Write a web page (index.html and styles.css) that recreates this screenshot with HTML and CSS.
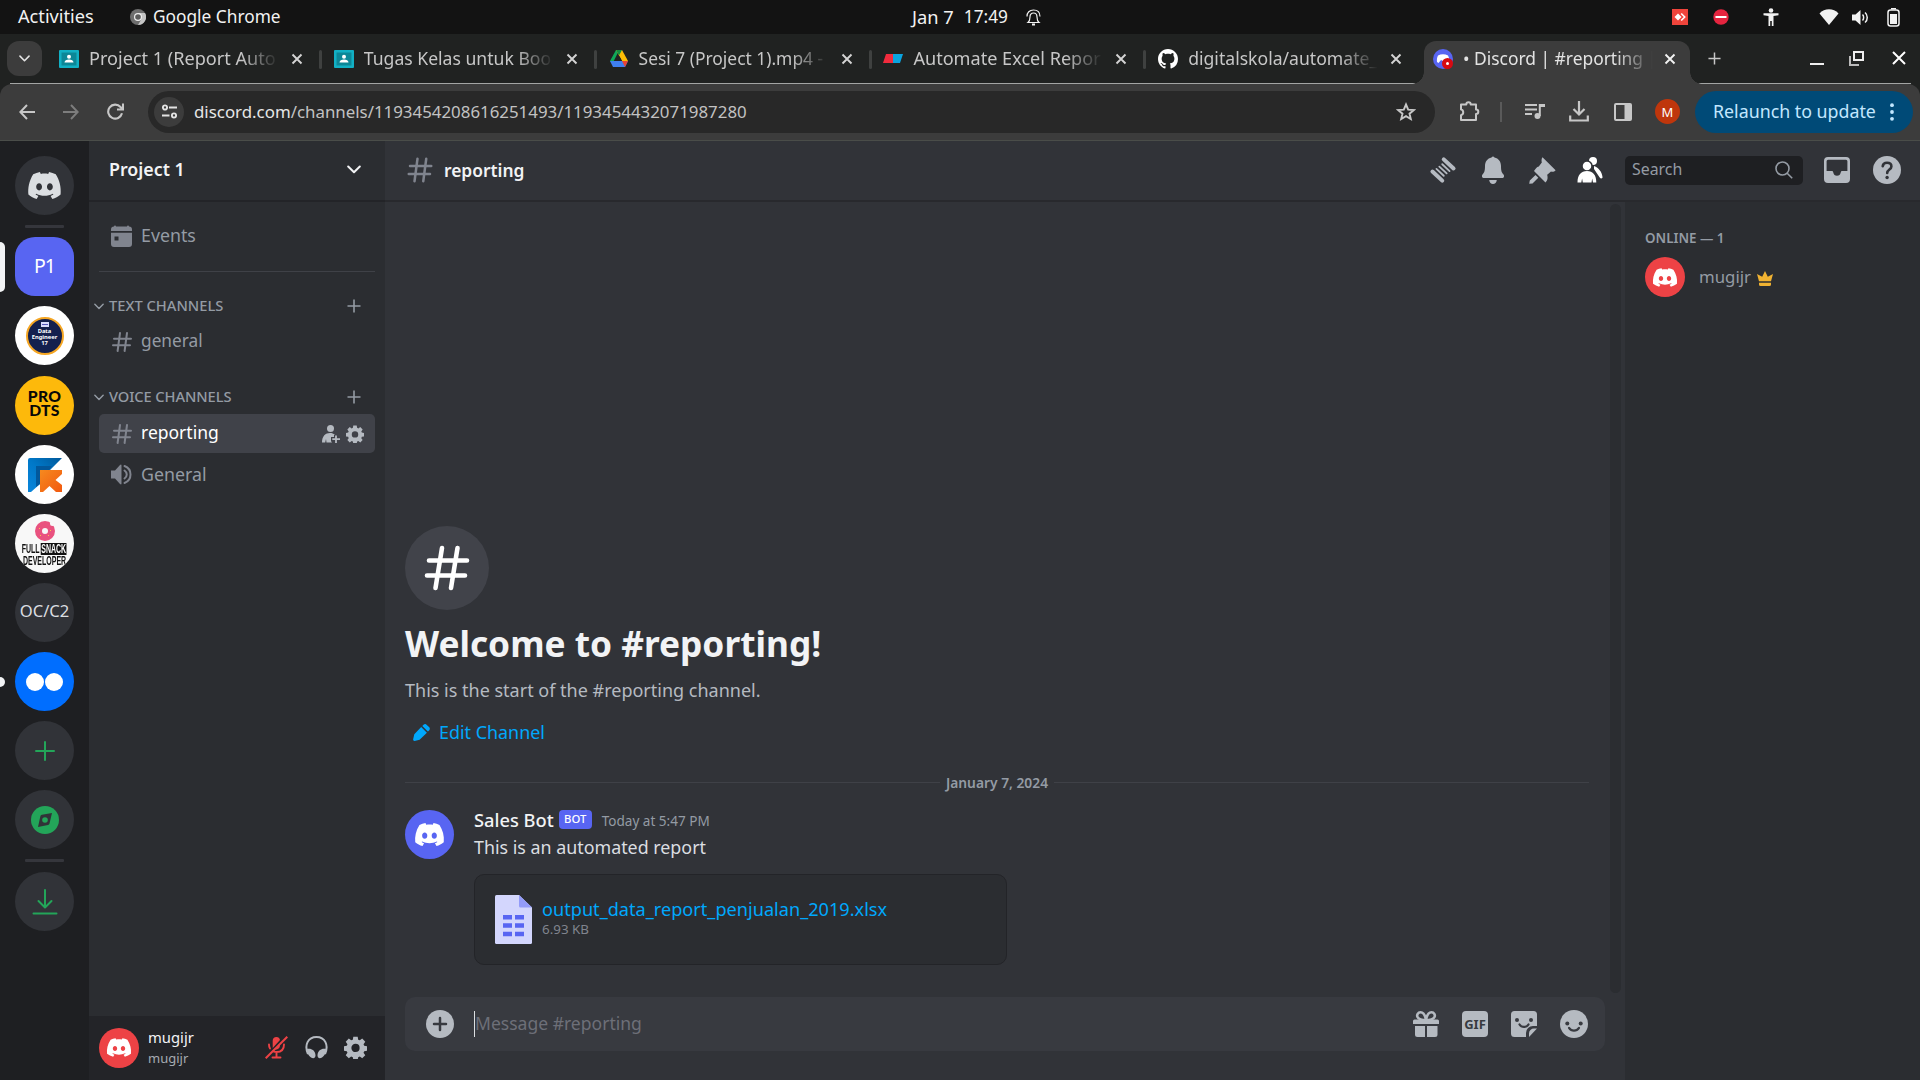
FILE: index.html
```html
<!DOCTYPE html>
<html lang="en">
<head>
<meta charset="utf-8">
<title>• Discord | #reporting</title>
<link rel="stylesheet" href="styles.css">
</head>
<body>
<svg class="defs" aria-hidden="true">
  <symbol id="discord" viewBox="0 0 28 20"><path fill="currentColor" d="M23.0212 1.67671C21.3107 0.879656 19.5079 0.318797 17.6584 0C17.4062 0.461742 17.1749 0.934541 16.9708 1.4184C15.003 1.12145 12.9974 1.12145 11.0283 1.4184C10.819 0.934541 10.589 0.461744 10.3368 0.00546311C8.48074 0.324393 6.67795 0.885118 4.96746 1.68231C1.56727 6.77853 0.649666 11.7538 1.11108 16.652C3.10102 18.1418 5.3262 19.2743 7.69177 20C8.22338 19.2743 8.69519 18.4993 9.09812 17.691C8.32996 17.3997 7.58522 17.0424 6.87684 16.6135C7.06531 16.4762 7.24726 16.3387 7.42403 16.1847C11.5911 18.1749 16.408 18.1749 20.5763 16.1847C20.7531 16.3332 20.9351 16.4762 21.1171 16.6135C20.41 17.0369 19.6639 17.3997 18.897 17.691C19.3052 18.4993 19.7718 19.2689 20.3021 19.9945C22.6677 19.2689 24.8929 18.1364 26.8828 16.6466H26.8893C27.43 10.9731 25.9665 6.04728 23.0212 1.67671ZM9.68041 13.6383C8.39754 13.6383 7.34085 12.4453 7.34085 10.994C7.34085 9.54272 8.37155 8.34973 9.68041 8.34973C10.9893 8.34973 12.0395 9.54272 12.0187 10.994C12.0187 12.4453 10.9828 13.6383 9.68041 13.6383ZM18.3161 13.6383C17.0332 13.6383 15.9765 12.4453 15.9765 10.994C15.9765 9.54272 17.0124 8.34973 18.3161 8.34973C19.6184 8.34973 20.6751 9.54272 20.6543 10.994C20.6543 12.4453 19.6184 13.6383 18.3161 13.6383Z"/></symbol>
  <symbol id="hash" viewBox="0 0 24 24"><path fill="none" stroke="currentColor" stroke-width="2" stroke-linecap="round" d="M10 3 7.6 21M17 3l-2.4 18M4 8.8h17M3 15.2h17"/></symbol>
  <symbol id="close" viewBox="0 0 12 12"><path fill="none" stroke="currentColor" stroke-width="1.9" d="M1.5 1.5l9 9M10.500 1.500l-9 9"/></symbol>
  <symbol id="chevron" viewBox="0 0 14 9"><path fill="none" stroke="currentColor" stroke-width="2" stroke-linecap="round" stroke-linejoin="round" d="M1.200 1.500 7 7.300l5.800-5.800"/></symbol>
  <symbol id="plus" viewBox="0 0 14 14"><path fill="none" stroke="currentColor" stroke-width="1.600" d="M7 .5v13M.5 7h13"/></symbol>
  <symbol id="gear" viewBox="0 0 24 24"><path fill="currentColor" fill-rule="evenodd" d="M9.700 0.800h4.600l.5 3 1.700.7 2.500-1.800 3.200 3.300-1.800 2.500.7 1.600 3 .5v4.700l-3 .5-.7 1.700 1.800 2.500-3.200 3.200-2.500-1.800-1.700.7-.5 3H9.700l-.5-3-1.700-.7L5 23.200 1.800 20l1.800-2.500-.7-1.700-3-.5v-4.700l3-.5.7-1.600L1.800 6 5 2.700l2.500 1.800 1.700-.7zM12 8.200a4.300 4.300 0 1 0 0 8.600 4.300 4.300 0 0 0 0-8.600z"/></symbol>
  <symbol id="classroom" viewBox="0 0 20 18"><rect width="20" height="18" rx="1" fill="#12b0c4"/><rect x="2.500" y="2.500" width="15" height="13" fill="#0c8797"/><circle cx="10" cy="6.700" r="2" fill="#fff"/><path fill="#fff" d="M5.500 12.500c0-2 2-3.100 4.500-3.100s4.500 1.100 4.500 3.100z"/></symbol>
</svg>

<header class="topbar">
  <div class="topbar-left">
    <span class="activities">Activities</span>
    <svg width="16" height="16" viewBox="0 0 16 16"><circle cx="8" cy="8" r="8" fill="#6e6e6e"/><path fill="#c4c4c4" d="M8 4h7a8 8 0 0 1-7 12l3.500-6z"/><circle cx="8" cy="8" r="4" fill="#eee"/><circle cx="8" cy="8" r="2.800" fill="#5c5c5c"/></svg>
    <span class="app-name">Google Chrome</span>
  </div>
  <div class="clock"><span class="day">Jan 7</span><span>17:49</span>
    <svg width="15" height="17" viewBox="0 0 15 17" fill="none" stroke="#f2f2f2" stroke-width="1.200"><path d="M2 13.500c1.800-1.500 2-3 2-5.500 0-2.500 1.200-4 3.500-4S11 5.500 11 8c0 2.500.2 4 2 5.500zM1 7.500C1 3.500 3.500 1 7.500 1S14 3.500 14 7.500"/><path d="M6 15.500h3" stroke-width="2"/></svg>
  </div>
  <div class="tray">
    <svg width="16" height="16" viewBox="0 0 16 16"><path fill="#ef443b" d="M0 0h16v16H0z"/><path fill="#fff" d="M6 4.500 9.500 8 6 11.500 2.500 8z"/><path fill="none" stroke="#fff" stroke-width="1.600" d="M9.200 4.500 12.700 8l-3.500 3.500"/></svg>
    <svg class="tray-stop" width="16" height="16" viewBox="0 0 16 16"><circle cx="8" cy="8" r="7.700" fill="#e5243f"/><path fill="#fff" d="M2.500 7h11v2h-11z"/></svg>
    <svg class="tray-person" width="16" height="18" viewBox="0 0 16 18" fill="#f2f2f2"><circle cx="8" cy="2.500" r="2.300"/><path d="M.5 5.300h15v2L10.500 8v10H8.800v-5H7.200v5H5.500V8L.5 7.300z"/></svg>
    <svg class="tray-wifi" width="20" height="16" viewBox="0 0 20 16"><path fill="#f2f2f2" d="M10 16 .5 4.500C3 1.500 6.500.3 10 .3s7 1.200 9.500 4.200z"/></svg>
    <svg class="tray-sound" width="18" height="17" viewBox="0 0 18 17"><path fill="#f2f2f2" d="M0 5.500h3.500L8.500 1v15l-5-4.500H0z"/><path fill="none" stroke="#f2f2f2" stroke-width="1.500" d="M10.500 5.500c1.500 1.500 1.500 4.500 0 6M13 3.500c3 2.500 3 7.500 0 10"/></svg>
    <svg class="tray-battery" width="13" height="19" viewBox="0 0 13 19"><rect x="1" y="2" width="11" height="16" rx="2.500" fill="none" stroke="#f2f2f2" stroke-width="1.500"/><path fill="#f2f2f2" d="M4 0h5v1.500H4zM3 6h7v10H3z"/></svg>
  </div>
</header>

<div class="tabstrip">
  <div class="tab-search"><svg width="11" height="7"><use href="#chevron"/></svg></div>
  <div class="tab"><svg class="fav" width="20" height="18"><use href="#classroom"/></svg><span class="tab-title">Project 1 (Report Auto</span><svg class="x" width="12" height="12"><use href="#close"/></svg></div>
  <div class="tab"><svg class="fav" width="20" height="18"><use href="#classroom"/></svg><span class="tab-title tight">Tugas Kelas untuk Boo</span><svg class="x" width="12" height="12"><use href="#close"/></svg></div>
  <div class="tab"><svg class="fav" width="20" height="17" viewBox="0 0 20 17"><path fill="#0fa958" d="M7 0h3l-2.500 5.500-4 8L1 11z"/><path fill="#fcbd05" d="M7 0h6l6 11h-6z"/><path fill="#158a41" d="M7 0h6l-3 5.500z"/><path fill="#3f7ff0" d="M1 11h18l-3 6H4z"/><path fill="#ea4335" d="M13 11h6l-3 6z"/><path fill="#202221" d="M10 5.500 13 11H7z"/></svg><span class="tab-title drive">Sesi 7 (Project 1).mp4 -</span><svg class="x" width="12" height="12"><use href="#close"/></svg></div>
  <div class="tab"><svg class="fav" width="20" height="9" viewBox="0 0 20 9"><path fill="#f12b3d" d="M3 0h7v9H0z"/><path fill="#0aa4e0" d="M10 0h10l-3 9h-7z"/></svg><span class="tab-title">Automate Excel Repor</span><svg class="x" width="12" height="12"><use href="#close"/></svg></div>
  <div class="tab"><svg class="fav" width="20" height="20" viewBox="0 0 16 16"><path fill="#fff" d="M8 0C3.580 0 0 3.580 0 8c0 3.540 2.290 6.530 5.470 7.590.4.070.55-.17.55-.38 0-.19-.01-.82-.01-1.490-2.010.37-2.530-.49-2.690-.94-.09-.23-.48-.94-.82-1.130-.28-.15-.68-.52-.01-.53.63-.01 1.080.58 1.230.82.72 1.210 1.870.87 2.330.66.07-.52.28-.87.51-1.070-1.780-.2-3.640-.89-3.640-3.950 0-.87.31-1.590.82-2.150-.08-.2-.36-1.020.08-2.120 0 0 .67-.21 2.200.82.64-.18 1.320-.27 2-.27s1.360.09 2 .27c1.530-1.040 2.200-.82 2.200-.82.44 1.100.16 1.920.08 2.120.51.56.82 1.270.82 2.150 0 3.070-1.870 3.750-3.650 3.950.29.25.54.73.54 1.480 0 1.070-.01 1.930-.01 2.200 0 .21.15.46.55.38A8.010 8.010 0 0 0 16 8c0-4.420-3.580-8-8-8z"/></svg><span class="tab-title github">digitalskola/automate_</span><svg class="x" width="12" height="12"><use href="#close"/></svg></div>
  <div class="tab tab-active"><svg class="fav" width="20" height="20" viewBox="0 0 20 20"><circle cx="10" cy="10" r="10" fill="#5865f2"/><path fill="#fff" d="M5 6.500c3-1.800 7-1.800 10 0 1 2 1.500 4 1.200 6.500H12l-4-2-2.500 3L4 13c-.3-2.500 0-4.500 1-6.500z"/><circle cx="14.500" cy="14.500" r="5.500" fill="#d80a12"/><circle cx="14.500" cy="14.500" r="1.500" fill="#fff"/></svg><span class="tab-title wide">• Discord | #reporting |</span><svg class="x" width="12" height="12"><use href="#close"/></svg></div>
  <svg class="new-tab" width="13" height="13"><use href="#plus"/></svg>
  <div class="window-controls">
    <svg width="14" height="16" viewBox="0 0 14 16"><path fill="#eee" d="M0 12h14v2H0z"/></svg>
    <svg width="15" height="15" viewBox="0 0 15 15" fill="none" stroke="#eee" stroke-width="2"><path d="M5 1h9v8H5z"/><path d="M1 5v9h9" stroke="#bbb"/></svg>
    <svg width="14" height="14" viewBox="0 0 14 14"><path fill="none" stroke="#fff" stroke-width="2" d="M1 1l12 12M13 1 1 13"/></svg>
  </div>
</div>

<div class="toolbar">
  <svg class="nav-back" width="16" height="16" viewBox="0 0 16 16"><path fill="none" stroke="#c7c7c7" stroke-width="2" d="M16 8H1.500M8 1 1.300 8 8 15"/></svg>
  <svg class="nav-forward" width="16" height="16" viewBox="0 0 16 16"><path fill="none" stroke="#7d7d7d" stroke-width="2" d="M0 8h14.500M8 1l6.700 7L8 15"/></svg>
  <svg class="nav-reload" width="17" height="17" viewBox="0 0 17 17"><path fill="none" stroke="#c7c7c7" stroke-width="2.100" d="M15 10.300A7 7 0 1 1 13.500 4L15.500 6M16 .5v6h-6"/></svg>
  <div class="omnibox">
    <span class="site-info"><svg width="15" height="15" viewBox="0 0 15 15" fill="none" stroke="#e3e3e3" stroke-width="1.900"><circle cx="3" cy="3.500" r="2.100"/><path d="M7 3.500h8M0 11.500h7.500"/><circle cx="12" cy="11.500" r="2.100"/></svg></span>
    <span class="url">discord.com<span class="url-path">/channels/1193454208616251493/1193454432071987280</span></span>
    <svg class="star" width="20" height="20" viewBox="0 0 20 20"><path fill="none" stroke="#c7c7c7" stroke-width="1.900" stroke-linejoin="miter" d="m10 2.500 2.200 5.100 5.500.5-4.200 3.600 1.300 5.400L10 14.200l-4.800 2.900 1.300-5.400-4.200-3.600 5.500-.5z"/></svg>
  </div>
  <svg class="tb-puzzle" width="21" height="21" viewBox="0 0 21 21"><path fill="none" stroke="#c7c7c7" stroke-width="2" stroke-linejoin="round" d="M2 3.500h5.300a2.200 2.200 0 0 1 4.400 0H17v5a2.300 2.300 0 0 1 0 4.600V19H2v-4.800a3 3 0 0 0 0-5.800z"/></svg>
  <span class="tb-sep"></span>
  <svg class="tb-music" width="20" height="17" viewBox="0 0 20 17"><path stroke="#c7c7c7" stroke-width="2" d="M0 2h12M0 6.500h12M0 11h7"/><circle cx="12.500" cy="13" r="3" fill="#c7c7c7"/><path fill="#c7c7c7" d="M13.800 1H20v3h-4.200v9h-2z"/></svg>
  <svg class="tb-download" width="20" height="21" viewBox="0 0 20 21"><path fill="none" stroke="#c7c7c7" stroke-width="2.200" d="M10 0v13M4.500 8 10 13.500 15.500 8M1.200 14.500v5h17.600v-5"/></svg>
  <svg class="tb-panel" width="18" height="18" viewBox="0 0 18 18"><rect x="1" y="1" width="16" height="16" rx="1" fill="none" stroke="#c7c7c7" stroke-width="2"/><path fill="#c7c7c7" d="M10.500 1H17v16h-6.500z"/></svg>
  <span class="profile">M</span>
  <div class="relaunch"><span>Relaunch to update</span><svg width="4" height="18" viewBox="0 0 4 18" fill="#c2e7ff"><circle cx="2" cy="2.200" r="1.900"/><circle cx="2" cy="9" r="1.900"/><circle cx="2" cy="15.800" r="1.900"/></svg></div>
</div>

<div class="app">
  <nav class="servers">
    <div class="server home"><svg width="35" height="27" viewBox="0 0 28 20" preserveAspectRatio="none"><use href="#discord"/></svg></div>
    <div class="server-sep"></div>
    <div class="server p1">P1<span class="pill"></span></div>
    <div class="server de"><div class="de-badge"><svg width="8" height="5" viewBox="0 0 8 5"><path fill="#d9dcff" d="M0 0h8v5H0z"/><path fill="#5557b8" d="M1 2h6v1H1z"/></svg><span>Data</span><span>Engineer</span><span>17</span></div></div>
    <div class="server prodts"><span>PRO</span><span>DTS</span></div>
    <div class="server kelas"><svg width="34" height="34" viewBox="0 0 34 34"><defs><linearGradient id="kb" x1="0" y1="1" x2="1" y2="0"><stop offset="0" stop-color="#0a86dc"/><stop offset=".5" stop-color="#0078c8"/><stop offset="1" stop-color="#00589a"/></linearGradient><linearGradient id="ko" x1="0" y1="0" x2="1" y2="1"><stop offset="0" stop-color="#f68a1f"/><stop offset="1" stop-color="#f2590f"/></linearGradient></defs><path fill="url(#kb)" d="M2 0h32L22 12H12v14L3 34H0V2a2 2 0 0 1 2-2z"/><path fill="#02589c" d="M8 8h16l-3 4h-9v14l-4 3z"/><path fill="url(#ko)" d="M12 12h22v4l-6.500 6L34 27v7h-6l-6.500-6-6.500 6h-3z"/></svg></div>
    <div class="server snack"><svg width="20" height="20" viewBox="0 0 20 20"><circle cx="10" cy="10" r="6.500" fill="none" stroke="#e9527f" stroke-width="7"/><circle cx="17.500" cy="2.500" r="2.500" fill="#f8f8f8"/><path stroke="#ffc14d" stroke-width="1" d="M4 7l1 1M13 15l1-1M5 14l1 1M15 9l1 1"/></svg><span class="snack-line">FULL<b>SNACK</b></span><span class="snack-line">DEVELOPER</span></div>
    <div class="server occ">OC/C2</div>
    <div class="server blue"><i></i><i></i><span class="pill pill-small"></span></div>
    <div class="server add"><svg width="20" height="20" viewBox="0 0 20 20"><path stroke="currentColor" stroke-width="2" stroke-linecap="round" d="M10 1v18M1 10h18"/></svg></div>
    <div class="server add"><svg width="28" height="28" viewBox="0 0 28 28"><circle cx="14" cy="14" r="14" fill="currentColor"/><path fill="#313338" d="m21 7-2.500 10.500a2 2 0 0 1-1.500 1.500L7 21l2.300-10.500a2 2 0 0 1 1.600-1.700z"/><circle cx="14" cy="14" r="2.800" fill="currentColor"/></svg></div>
    <div class="server-sep"></div>
    <div class="server add last"><svg width="26" height="26" viewBox="0 0 26 26"><path fill="none" stroke="currentColor" stroke-width="2" stroke-linecap="round" stroke-linejoin="round" d="M13 1v17M6.500 12 13 18.500 19.500 12M1.500 24.500h23"/></svg></div>
  </nav>

  <aside class="sidebar">
    <div class="guild-header"><span>Project 1</span><svg width="14" height="9"><use href="#chevron"/></svg></div>
    <div class="channels">
      <div class="channel"><svg width="21" height="22" viewBox="0 0 21 22"><path fill="currentColor" d="M3 1.500a1 1 0 0 1 2 0h11a1 1 0 0 1 2 0 3 3 0 0 1 3 3V6H0V4.500a3 3 0 0 1 3-3z"/><path fill="currentColor" fill-rule="evenodd" d="M0 7.800h21V19a3 3 0 0 1-3 3H3a3 3 0 0 1-3-3zM3.500 11.500v4h4v-4z"/></svg><span>Events</span></div>
      <div class="channel-divider"></div>
      <div class="category text-cat"><svg width="10" height="7"><use href="#chevron"/></svg><span>TEXT CHANNELS</span><svg class="cat-plus" width="14" height="14"><use href="#plus"/></svg></div>
      <div class="channel general"><svg width="24" height="24"><use href="#hash"/></svg><span>general</span></div>
      <div class="category voice-cat"><svg width="10" height="7"><use href="#chevron"/></svg><span>VOICE CHANNELS</span><svg class="cat-plus" width="14" height="14"><use href="#plus"/></svg></div>
      <div class="channel selected"><svg width="24" height="24"><use href="#hash"/></svg><span>reporting</span>
        <span class="channel-actions"><svg width="18" height="18" viewBox="0 0 18 18"><circle cx="8.500" cy="3.500" r="3.500" fill="currentColor"/><path fill="currentColor" d="M0 17.500C0 11 3.500 8 8 8c2 0 3.500.6 4.600 1.600L12.500 12H9v4l1 1.500H4.500L4 14l-.8 3.500z"/><path stroke="#404249" stroke-width="4" d="M14 10v8M9.500 14.200H18"/><path stroke="currentColor" stroke-width="1.800" d="M14 10.500V18M10.300 14.200H18"/></svg><svg width="18" height="18"><use href="#gear"/></svg></span></div>
      <div class="channel voice"><svg width="21" height="21" viewBox="0 0 21 21"><path fill="currentColor" d="M0 6.500h4L9 1q1.500-1 1.500.5v18q0 1.500-1.500.5l-5-5.500H0z"/><path fill="none" stroke="currentColor" stroke-width="2" stroke-linecap="round" d="M13.500 6.500c3 2 3 6 0 8M13.500 2c8 3 8 14 0 17"/></svg><span>General</span></div>
    </div>
    <div class="user-panel">
      <div class="avatar red"><svg width="26" height="19"><use href="#discord"/></svg></div>
      <div class="user-names"><span>mugijr</span><small>mugijr</small></div>
      <svg class="mic" width="23" height="23" viewBox="0 0 23 23"><path fill="#ed4245" d="M11.500 1A3.800 3.800 0 0 1 15 4L7.700 12V4.800A3.800 3.800 0 0 1 11.500 1z"/><path fill="none" stroke="#ed4245" stroke-width="1.900" stroke-linecap="round" d="M4 8.500c0 2 .3 3 1 4M19 8.500c0 5-3 7.500-7.500 7.500-1 0-1.800-.1-2.600-.4M11.500 16v5.500M7.500 21.500h8M14 9.500c0 1.500-.8 2.500-2.500 3"/><path stroke="#ed4245" stroke-width="2" d="M.7 22.300 22.300.7"/></svg>
      <svg class="phones" width="23" height="23" viewBox="0 0 23 23"><path fill="none" stroke="currentColor" stroke-width="2" d="M3 18C-1 9 3 1 11.500 1S24 9 20 18"/><path fill="currentColor" d="M2 13c4-1 8 1 8.500 6 .3 3-2 4-4.500 2.500C3.500 20 2 17 2 13zM21 13c-4-1-8 1-8.500 6-.3 3 2 4 4.500 2.500 2.500-1.500 4-4.500 4-8.500z"/></svg>
      <svg class="settings" width="23" height="23"><use href="#gear"/></svg>
    </div>
  </aside>

  <section class="right">
    <header class="chat-header">
      <svg class="head-hash" width="30" height="30"><use href="#hash"/></svg><h1>reporting</h1>
      <div class="head-tools">
        <svg width="28" height="28" viewBox="0 0 28 28"><g transform="rotate(43 14 14)" fill="none" stroke="currentColor" stroke-linecap="round"><path stroke-width="4" d="M7.300 5.700h13.400M7.300 22.300h13.400"/><path stroke-width="1.800" d="M9.500 10.300h10M9 14h10M8.500 17.700h10"/></g></svg>
        <svg width="22" height="28" viewBox="0 0 22 28"><path fill="currentColor" d="M9.500 1.500q1.500-2 3 0C16.500 2.500 19 5.500 19 10c0 5 .7 6.500 2.500 8.500 1.300 1.700.3 3.500-1.500 3.500H2C.2 22-.8 20.200.5 18.500 2.300 16.500 3 15 3 10c0-4.500 2.500-7.500 6.500-8.500zM7.200 24h7.600c-.3 2.500-1.800 4-3.800 4s-3.500-1.500-3.800-4z"/></svg>
        <svg width="27" height="27" viewBox="0 0 27 27"><path fill="currentColor" d="M13.500.3 26.600 13.200c-1.300 1.500-3 1.700-4.600 1.300l-3.800 3.300c.8 3 .5 5.500-1.700 7.700L5 14c2-2.500 2.500-4.200 4.800-4.500l3-3.900c-.5-2-.3-4 .7-5.300zM6.500 18l2.800 2.800-5.800 5.600-3.300.4.600-3.200z"/></svg>
        <svg class="white" width="26" height="26" viewBox="0 0 26 26"><circle cx="16" cy="4" r="4" fill="currentColor"/><path fill="currentColor" d="M17 9c5 2 8 6 8.500 11 .2 1.800-2 2-3 .2L17 12z"/><circle cx="10" cy="9" r="5" fill="currentColor" stroke="#313338" stroke-width="1.500"/><path fill="currentColor" d="M.5 25.500C.5 18 4 14 10 14s9.300 4 9.300 11.500H16l-.8-4-.7 4H5.800l-.7-4-.8 4z"/></svg>
        <div class="search"><span>Search</span><svg width="18" height="18" viewBox="0 0 18 18"><circle cx="7.500" cy="7.500" r="6.500" fill="none" stroke="#949ba4" stroke-width="1.600"/><path stroke="#949ba4" stroke-width="1.600" d="m12.200 12.200 5 5"/></svg></div>
        <svg width="26" height="26" viewBox="0 0 26 26"><path fill="currentColor" fill-rule="evenodd" d="M4 0h18a4 4 0 0 1 4 4v18a4 4 0 0 1-4 4H4a4 4 0 0 1-4-4V4a4 4 0 0 1 4-4zm0 2.800A1.500 1.500 0 0 0 2.600 4.300V14H8q1 0 1.200 1.200.7 3.500 3.800 3.500t3.800-3.500Q17 14 18 14h5.400V4.300A1.500 1.500 0 0 0 22 2.800z"/></svg>
        <svg class="help" width="28" height="28" viewBox="0 0 28 28"><circle cx="14" cy="14" r="14" fill="currentColor"/><path fill="none" stroke="#313338" stroke-width="2.600" stroke-linecap="round" d="M9.700 10.200C10 8 11.700 6.800 14 6.800c2.500 0 4.400 1.400 4.400 3.600 0 3.200-4.200 3-4.200 6.600"/><circle cx="14.100" cy="21.500" r="1.700" fill="#313338"/></svg>
      </div>
    </header>
    <div class="content">
      <main class="chat">
        <div class="scrollbar"></div>
        <div class="messages">
          <div class="welcome-icon"><svg width="54" height="54" viewBox="0 0 54 54"><path fill="none" stroke="#fff" stroke-width="4.600" stroke-linecap="round" d="M22 7l-6.500 40M37.500 7 31 47M9 19.500h38M7 34.500h38"/></svg></div>
          <h2>Welcome to #reporting!</h2>
          <p class="welcome-sub">This is the start of the #reporting channel.</p>
          <div class="edit-channel"><svg width="17" height="17" viewBox="0 0 17 17"><path fill="currentColor" d="M10.500.8a2.500 2.500 0 0 1 3.300.1l2.200 2.200a2.500 2.500 0 0 1 .1 3.400l-1.200 1.100-5.600-5.600zM8.200 3l5.700 5.700-7.300 7.100-5 1.100Q0 17 .1 15.400l1.200-5.100z"/></svg><span>Edit Channel</span></div>
          <div class="date-divider"><span>January 7, 2024</span></div>
          <article class="message">
            <div class="avatar bot"><svg width="31" height="23" viewBox="0 0 28 20" preserveAspectRatio="none"><use href="#discord"/></svg></div>
            <div class="message-body">
              <div class="message-head"><span class="author">Sales Bot</span><span class="bot-tag">BOT</span><time>Today at 5:47 PM</time></div>
              <p>This is an automated report</p>
              <div class="attachment">
                <svg width="37" height="49" viewBox="0 0 37 49"><path fill="#d3d6fd" d="M1.500 0H24l13 12.500v35q0 1.500-1.500 1.500h-34Q0 49 0 47.500v-46Q0 0 1.500 0z"/><path fill="#939bf9" d="M24 0l13 12.500H25.500q-1.500 0-1.500-1.500z"/><path fill="#5865f2" d="M8 20h9v4.500H8zM20 20h9v4.500h-9zM8 28.300h9v4.500H8zM20 28.300h9v4.500h-9zM8 36.700h9v4.500H8zM20 36.700h9v4.500h-9z"/></svg>
                <div class="file"><span class="file-name">output_data_report_penjualan_2019.xlsx</span><span class="file-size">6.93 KB</span></div>
              </div>
            </div>
          </article>
        </div>
        <div class="composer">
          <svg class="attach" width="28" height="28" viewBox="0 0 28 28"><circle cx="14" cy="14" r="14" fill="currentColor"/><path stroke="#383a40" stroke-width="2.500" stroke-linecap="round" d="M14 8v12M8 14h12"/></svg>
          <span class="caret"></span><span class="placeholder">Message #reporting</span>
          <div class="composer-tools">
            <svg width="26" height="26" viewBox="0 0 26 26"><path fill="currentColor" d="M1.500 8.500h23A1.500 1.500 0 0 1 26 10v3H0v-3a1.500 1.500 0 0 1 1.500-1.500zM2 15h10v11H4.500A2.500 2.500 0 0 1 2 23.500zM14 15h10.500v8.500A2.500 2.500 0 0 1 22 26h-8z"/><path fill="none" stroke="currentColor" stroke-width="2.600" d="M13 9C12 3.500 10 1.300 7.500 1.300S3.500 4 4.500 6 8 9 13 9c1-5.500 3-7.700 5.500-7.700s4 2.700 3 4.700S18 9 13 9z"/></svg>
            <span class="gif">GIF</span>
            <svg width="26" height="26" viewBox="0 0 26 26"><path fill="currentColor" d="M3.500 0h19A3.500 3.500 0 0 1 26 3.500V15h-4a7 7 0 0 0-7 7v4H3.500A3.500 3.500 0 0 1 0 22.500v-19A3.500 3.500 0 0 1 3.500 0zM26 17.500 18 26v-3.500a5 5 0 0 1 5-5z"/><g fill="#383a40"><circle cx="6" cy="9" r="2"/><circle cx="20" cy="9" r="2"/></g><path fill="none" stroke="#383a40" stroke-width="2.200" stroke-linecap="round" d="M8.500 13.500c2 3.300 7 3.300 9 0"/></svg>
            <svg width="28" height="28" viewBox="0 0 28 28"><circle cx="14" cy="14" r="14" fill="currentColor"/><g fill="#383a40"><circle cx="7.300" cy="13.500" r="2"/><circle cx="20.700" cy="13.500" r="2"/></g><path fill="none" stroke="#383a40" stroke-width="2.200" stroke-linecap="round" d="M9 17.800c2.500 3.700 7.500 3.700 10 0"/></svg>
          </div>
        </div>
      </main>
      <aside class="members">
        <h3>ONLINE — 1</h3>
        <div class="member"><div class="avatar red"><svg width="26" height="19"><use href="#discord"/></svg></div><span>mugijr</span><svg class="crown" width="16" height="15" viewBox="0 0 16 15"><path fill="#f0b232" d="M8 0l2.800 5.800L16 3l-2 7.200H2L0 3l5.200 2.800zM2 11.700h12v1.800q0 1.500-1.500 1.500h-9Q2 15 2 13.500z"/></svg></div>
      </aside>
    </div>
  </section>
</div>
</body>
</html>
```
FILE: styles.css
```css
* { box-sizing: border-box; }
body { margin: 0; width: 1920px; height: 1080px; overflow: hidden; background: #202221; font-family: "Noto Sans", "Open Sans", sans-serif; display: flex; flex-direction: column; }
svg { flex: none; display: block; }
h1, h2, h3, p { margin: 0; }
span { white-space: nowrap; }
.defs { position: absolute; width: 0; height: 0; }

/* desktop bar */
.topbar { height: 34px; flex: none; background: #131313; color: #f2f2f2; display: grid; grid-template-columns: 912px 1fr auto; align-items: center; font-size: 17.300px; }
.topbar span { padding-bottom: 2px; }
.topbar-left { display: flex; align-items: center; padding-left: 18px; }
.activities { font-size: 18.200px; width: 112px; }
.app-name { margin-left: 7px; }
.clock { display: flex; align-items: center; gap: 10px; }
.day { font-size: 18.300px; }
.clock svg { margin-left: 8px; }
.tray { display: flex; align-items: center; padding-right: 20px; }
.tray-stop { margin-left: 25px; }
.tray-person { margin-left: 34px; }
.tray-wifi { margin-left: 40px; }
.tray-sound { margin-left: 13px; }
.tray-battery { margin-left: 17px; }

/* browser tabs */
.tabstrip { height: 50px; flex: none; display: flex; background: #202221; position: relative; color: #c7c7c7; }
.tabstrip::after { content: ""; position: absolute; left: 10px; right: 9px; bottom: 0; height: 1px; background: #a3a5a4; }
.tab-search { width: 35px; height: 35px; margin: 7px 8px 0 7px; border-radius: 12px; background: #3c3c3c; color: #e3e3e3; display: flex; align-items: center; justify-content: center; }
.tab { width: 274.800px; padding: 7px 0 8px 9px; height: 50px; display: flex; align-items: center; position: relative; }
.tab-title { width: 190px; margin-left: 10px; padding-bottom: 2px; overflow: hidden; font-size: 18.100px; -webkit-mask-image: linear-gradient(90deg, #000 80%, transparent); mask-image: linear-gradient(90deg, #000 80%, transparent); }
.tab-title.tight { font-size: 17.600px; }
.tab-title.drive { font-size: 17.400px; }
.tab-title.github { font-size: 17.600px; }
.tab-title.wide { font-size: 17.400px; }
.tab .x { margin-left: 12px; color: #d4d4d4; }
.tab:not(.tab-active)::after { content: ""; position: absolute; left: 269px; top: 16px; width: 3px; height: 19px; border-radius: 2px; background: #3f4140; }
.tab:nth-child(6)::after { display: none; }
.tab-active { width: 266px; margin-top: 7px; height: 43px; padding: 0 0 8px 9px; background: #3c3c3c; border-radius: 12px 12px 0 0; color: #e3e3e3; z-index: 1; }
.tab-active .x { margin-left: 11px; color: #f2f2f2; }
.tab-active::before, .tab-active::after { content: ""; position: absolute; bottom: 0; width: 12px; height: 12px; }
.tab-active::before { left: -12px; background: radial-gradient(circle at 0 0, transparent 11.500px, #3c3c3c 12px); }
.tab-active::after { right: -12px; background: radial-gradient(circle at 100% 0, transparent 11.500px, #3c3c3c 12px); }
.new-tab { margin: 18px 0 0 18px; }
.window-controls { margin: 17px 14px 0 auto; display: flex; gap: 25px; align-items: flex-start; }
.window-controls svg + svg + svg { margin-left: 3px; }

/* browser toolbar */
.toolbar { height: 57px; flex: none; background: #3c3c3c; border-radius: 12px 12px 0 0; border-bottom: 1px solid #4a4d49; display: flex; align-items: center; padding: 0 7px 1px 19px; }
.nav-forward { margin-left: 28px; }
.nav-reload { margin-left: 28px; }
.omnibox { margin-left: 24px; width: 1287px; height: 42px; border-radius: 21px; background: #282828; display: flex; align-items: center; padding: 0 19px 0 6px; }
.site-info { width: 30px; height: 30px; border-radius: 50%; background: #3c3c3c; display: flex; align-items: center; justify-content: center; }
.url { margin-left: 10px; padding-bottom: 1px; font-size: 16.870px; color: #e6e6e6; }
.url-path { color: #c2c2c2; }
.star { margin-left: auto; }
.tb-puzzle { margin-left: 24px; }
.tb-sep { width: 2px; height: 20px; background: #5a5a5a; margin-left: 20px; }
.tb-music { margin-left: 23px; }
.tb-download { margin-left: 24px; }
.tb-panel { margin-left: 25px; }
.profile { width: 25px; height: 25px; margin-left: 23px; border-radius: 50%; background: #bf360c; color: #fff; font-size: 13px; display: flex; align-items: center; justify-content: center; }
.relaunch { margin-left: 15px; width: 218px; height: 42px; border-radius: 21px; background: #004a77; color: #c2e7ff; font-size: 17.800px; display: flex; align-items: center; padding: 0 19px 0 18px; justify-content: space-between; }
.relaunch span { padding-bottom: 1px; }

/* server list */
.app { flex: 1; display: flex; min-height: 0; }
.servers { width: 89px; background: #1e1f22; display: flex; flex-direction: column; align-items: center; gap: 10px; padding-top: 15px; }
.server { width: 59px; height: 59px; flex: none; border-radius: 50%; background: #313338; display: flex; align-items: center; justify-content: center; color: #dbdee1; position: relative; }
.server-sep { width: 39px; height: 3px; margin-bottom: -1px; border-radius: 1px; background: #35363c; flex: none; }
.p1 { background: #5865f2; border-radius: 20px; color: #fff; font-size: 19.500px; letter-spacing: -1px; padding-bottom: 2px; }
.pill { position: absolute; left: -20px; top: 5px; width: 10px; height: 50px; border-radius: 5px; background: #f2f3f5; }
.pill-small { top: 25px; height: 10px; }
.de, .kelas { background: #fff; }
.de-badge { width: 38px; height: 38px; border: 2px solid #f5a623; border-radius: 50%; background: #14204e; color: #fff; font-size: 5.800px; line-height: 6px; font-weight: 700; display: flex; flex-direction: column; align-items: center; justify-content: center; padding-bottom: 4px; }
.de-badge svg { margin-bottom: 1px; }
.prodts { margin-top: 1px; background: #fdb90b; color: #080808; flex-direction: column; font: 900 15.700px/14px "Lato", sans-serif; letter-spacing: .300px; padding-bottom: 6px; }
.snack { background: #f8f8f8; color: #111; flex-direction: column; justify-content: flex-start; padding-top: 7px; overflow: hidden; }
.snack svg { margin-bottom: 2px; }
.snack-line { font: 700 12.500px/12px "Liberation Sans", sans-serif; transform: scaleX(.56); height: 12px; display: flex; flex: none; gap: 2px; }
.snack-line b { background: #111; color: #fff; padding: 0 1px; }
.occ { font-size: 16.600px; padding-bottom: 4px; }
.blue { background: #006eff; gap: 1px; }
.blue i { width: 18px; height: 18px; border-radius: 50%; background: #fff; }
.add { color: #23a559; }
.last { margin-top: 1px; }

/* channel sidebar */
.sidebar { width: 296px; background: #2b2d31; display: flex; flex-direction: column; }
.guild-header { height: 61px; border-bottom: 2px solid #232428; padding: 0 24px 2px 20px; display: flex; align-items: center; justify-content: space-between; color: #f2f3f5; font-weight: 600; font-size: 17.800px; }
.guild-header span { padding-bottom: 1px; }
.channels { flex: 1; padding: 0 10px; color: #80848e; }
.channel { height: 39px; border-radius: 5px; display: flex; align-items: center; padding: 0 12px; color: #80848e; font-size: 17.800px; }
.channel:first-child { margin-top: 14px; }
.channel span:first-of-type { margin-left: 9px; padding-bottom: 2px; color: #949ba4; }
.channel.general span { font-size: 17.300px; padding-bottom: 3px; }
.channel svg[width="24"] { margin: 0 -2px 0 -1px; }
.channel-divider { height: 1px; background: #3f4147; margin: 16px 0 0; }
.category { height: 20px; display: flex; align-items: center; font-size: 14.700px; color: #949ba4; margin-left: -5px; font-weight: 500; }
.category span { margin-left: 5px; padding-bottom: 2px; }
.cat-plus { margin-left: auto; margin-right: 14px; }
.text-cat { margin-top: 24px; }
.general { margin-top: 6px; }
.voice-cat { margin-top: 26px; letter-spacing: -.100px; }
.selected { margin-top: 7px; background: #404249; }
.channel.selected { padding-right: 11px; }
.channel.selected > span:first-of-type { color: #fff; font-size: 17.500px; padding-bottom: 3px; }
.channel .channel-actions { margin-left: auto; display: flex; gap: 6px; color: #b5bac1; }
.voice { margin-top: 2px; }
.user-panel { height: 64px; background: #232428; padding: 0 18px 1px 10px; display: flex; align-items: center; color: #b5bac1; }
.avatar { width: 40px; height: 40px; flex: none; border-radius: 50%; display: flex; align-items: center; justify-content: center; color: #fff; }
.red { background: #ed4245; }
.user-names { margin-left: 9px; width: 117px; display: flex; flex-direction: column; font-size: 14.800px; line-height: 21px; color: #f2f3f5; padding-bottom: 1px; }
.user-names small { font-size: 13px; line-height: 20px; color: #a6abb2; }
.phones { margin-left: 17px; }
.settings { margin-left: 16px; }

/* chat header */
.right { flex: 1; background: #313338; display: flex; flex-direction: column; min-width: 0; }
.chat-header { height: 61px; flex: none; border-bottom: 2px solid #28292d; display: flex; align-items: center; padding: 0 19px 1px 20px; color: #80848e; }
.chat-header h1 { margin-left: 9px; padding-bottom: 1px; color: #f2f3f5; font-size: 17.400px; font-weight: 600; }
.head-tools { margin-left: auto; display: flex; align-items: center; color: #b5bac1; }
.head-tools > svg + svg { margin-left: 25px; }
.head-tools > svg.white { color: #fff; margin-left: 21px; }
.head-tools > svg.help { margin-left: 23px; }
.search { width: 178px; height: 29px; margin: 0 21px 0 22px; border-radius: 5px; background: #1e1f22; color: #949ba4; font-size: 15.900px; display: flex; align-items: center; justify-content: space-between; padding: 0 10px 0 7px; }
.search span { line-height: 22px; padding-bottom: 2px; }

/* chat */
.content { flex: 1; display: flex; min-height: 0; }
.chat { width: 1240px; position: relative; display: flex; flex-direction: column; padding: 0 20px 29px; }
.scrollbar { position: absolute; right: 4px; top: 2px; width: 11px; height: 789px; border-radius: 6px; background: #2b2d31; }
.messages { flex: 1; display: flex; flex-direction: column; justify-content: flex-end; padding-bottom: 32px; }
.welcome-icon { width: 84px; height: 84px; border-radius: 50%; background: #41434a; display: flex; align-items: center; justify-content: center; }
.messages h2 { margin-top: 13px; font-size: 35.250px; line-height: 40px; font-weight: 700; color: #f2f3f5; }
.welcome-sub { margin-top: 15px; line-height: 24px; font-size: 18px; color: #b5bac1; }
.edit-channel { margin-top: 18px; height: 24px; padding-left: 8px; display: flex; align-items: center; gap: 9px; color: #00a8fc; font-size: 17.900px; }
.date-divider { margin-top: 30px; height: 16px; display: flex; align-items: center; gap: 6px; color: #949ba4; font-size: 13.800px; font-weight: 600; width: 1184px; }
.date-divider::before, .date-divider::after { content: ""; height: 1px; flex: 1; background: #3f4147; }
.message { margin-top: 20px; display: flex; gap: 20px; }
.bot { width: 49px; height: 49px; background: #5865f2; }
.message-head { height: 20px; display: flex; align-items: center; color: #f2f3f5; }
.author { font-size: 18.300px; font-weight: 500; padding-bottom: 2px; }
.bot-tag { margin-left: 5px; width: 33px; height: 19px; margin-bottom: 1px; border-radius: 4px; background: #5865f2; color: #fff; font-size: 11.300px; font-weight: 500; line-height: 18px; text-align: center; }
.message-head time { margin: 2px 0 0 10px; font-size: 13.550px; color: #949ba4; }
.message-body p { margin-top: 5px; line-height: 24px; font-size: 17.850px; color: #dbdee1; }
.attachment { margin-top: 15px; width: 533px; height: 91px; border: 1px solid #232428; border-radius: 10px; background: #2b2d31; display: flex; align-items: center; padding: 0 20px; }
.file { margin-left: 10px; padding-bottom: 4px; display: flex; flex-direction: column; }
.file-name { font-size: 18.150px; line-height: 24px; color: #00a8fc; }
.file-size { font-size: 13.400px; line-height: 17px; color: #80848e; }
.composer { height: 54px; border-radius: 10px; background: #383a40; display: flex; align-items: center; padding: 0 17px 1px 21px; color: #b5bac1; }
.caret { width: 1px; height: 26px; margin-left: 20px; background: #dbdee1; }
.placeholder { font-size: 17.550px; color: #6d6f78; padding-bottom: 1px; }
.composer-tools { margin-left: auto; display: flex; align-items: center; gap: 23px; }
.gif { width: 26px; height: 26px; border-radius: 4px; background: #b5bac1; color: #383a40; font-size: 13px; font-weight: 700; line-height: 26px; text-align: center; }

/* members */
.members { flex: 1; background: #2b2d31; padding: 26px 20px; }
.members h3 { font-size: 13.400px; line-height: 21px; font-weight: 600; color: #949ba4; }
.member { margin-top: 8px; display: flex; align-items: center; color: #949ba4; font-size: 16.800px; }
.member span { margin: 0 6px 0 14px; padding-bottom: 2px; }
.crown { margin-top: 2px; }
```
